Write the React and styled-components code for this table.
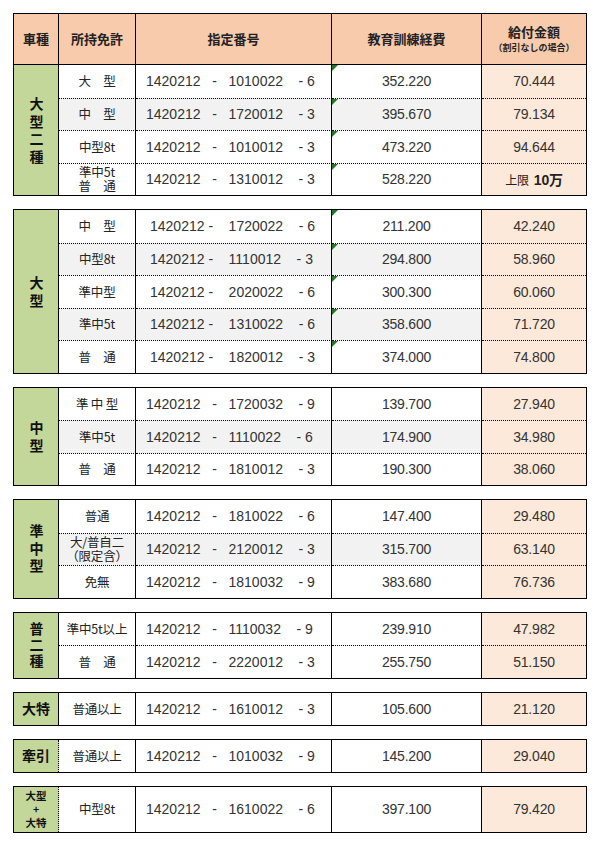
import styled, { createGlobalStyle, css } from 'styled-components'

const GlobalStyle = createGlobalStyle`
  body {
    margin: 0;
    background: #fff;
    font-family: "Liberation Sans", "Noto Sans CJK JP", sans-serif;
    color: #2b2b2b;
  }
`

const Page = styled.div`
  padding: 13px 0 0 13px;
  width: 601px;
  box-sizing: border-box;
`

const Table = styled.div`
  display: grid;
  grid-template-columns: 45px 77px 196px 150px 104px;
  grid-auto-rows: ${p => p.rowH || 32.5}px;
  width: 574px;
  box-sizing: border-box;
  border: 1px solid #000;
  ${p => p.attached ? css`border-top: none;` : css`margin-top: ${p.first ? 0 : 13}px;`}
`

const HeadCell = styled.div`
  background: #f8cbad;
  border-right: ${p => p.last ? 'none' : '1px solid #000'};
  display: flex;
  flex-direction: column;
  align-items: center;
  justify-content: center;
  font-family: "Noto Sans CJK JP", sans-serif;
  font-weight: 700;
  font-size: 13px;
  color: #222;
  line-height: 1.2;
`

const SubHead = styled.span`
  font-size: 9px;
  margin-top: 4px;
`

const Label = styled.div`
  grid-row: span ${p => p.span};
  background: #c4d79b;
  border-right: 1px ${p => p.dotted ? 'dotted' : 'solid'} #000;
  display: flex;
  flex-direction: column;
  align-items: center;
  justify-content: center;
  font-family: "Noto Sans CJK JP", sans-serif;
  font-weight: 700;
  font-size: ${p => p.small ? 10.5 : 14}px;
  line-height: ${p => p.small ? 13.5 : 17}px;
  color: #111;
`

const Upright = styled.span`
  writing-mode: vertical-rl;
  text-orientation: upright;
  letter-spacing: ${p => p.gap}px;
  padding-top: ${p => p.gap}px;
`

const Cell = styled.div`
  position: relative;
  box-sizing: border-box;
  display: flex;
  align-items: center;
  justify-content: ${p => p.left ? 'flex-start' : 'center'};
  text-align: center;
  background: ${p => p.pay ? '#fde9d9' : p.grey ? '#f2f2f2' : '#fff'};
  border-right: ${p => p.last ? 'none' : '1px solid #000'};
  border-top: ${p => p.first ? 'none' : '1px dotted #000'};
  font-size: 14px;
  letter-spacing: -0.2px;
  color: #333;
  ${p => p.flag && css`
    &::before {
      content: '';
      position: absolute;
      top: 0;
      left: 0;
      border-top: 6px solid #1f7a23;
      border-right: 6px solid transparent;
    }
  `}
`

const License = styled.span`
  font-family: "Noto Sans CJK JP", sans-serif;
  font-size: 12.5px;
  line-height: 14px;
  color: #222;
  white-space: pre;
`

const Code = styled.span`
  white-space: pre;
  padding-left: ${p => p.pad}px;
  letter-spacing: 0;
`

const Limit = styled.span`
  font-family: "Noto Sans CJK JP", sans-serif;
  font-size: 12px;
  color: #222;
  b {
    font-family: "Liberation Sans", "Noto Sans CJK JP", sans-serif;
    font-size: 14px;
    margin-left: 5px;
  }
`

const A = '1420212   -   '
const B = '1420212 -    '
const c = (pre, mid, tail) => pre + mid + '    - ' + tail

const sections = [
  {
    label: '大型二種', vertical: true, flag: true, pad: 10,
    rows: [
      ['大　型', c(A, '1010022', '6'), '352.220', '70.444'],
      ['中　型', c(A, '1720012', '3'), '395.670', '79.134', true],
      ['中型8t', c(A, '1010012', '3'), '473.220', '94.644'],
      ['準中5t\n普　通', c(A, '1310012', '3'), '528.220', 'limit'],
    ],
  },
  {
    label: '大型', vertical: true, flag: true, pad: 14,
    rows: [
      ['中　型', c(B, '1720022', '6'), '211.200', '42.240'],
      ['中型8t', c(B, '1110012', '3'), '294.800', '58.960', true],
      ['準中型', c(B, '2020022', '6'), '300.300', '60.060'],
      ['準中5t', c(B, '1310022', '6'), '358.600', '71.720', true],
      ['普　通', c(B, '1820012', '3'), '374.000', '74.800'],
    ],
  },
  {
    label: '中型', vertical: true, pad: 10,
    rows: [
      ['準 中 型', c(A, '1720032', '9'), '139.700', '27.940'],
      ['準中5t', c(A, '1110022', '6'), '174.900', '34.980', true],
      ['普　通', c(A, '1810012', '3'), '190.300', '38.060'],
    ],
  },
  {
    label: '準中型', vertical: true, pad: 10,
    rows: [
      ['普通', c(A, '1810022', '6'), '147.400', '29.480'],
      ['大/普自二\n（限定含）', c(A, '2120012', '3'), '315.700', '63.140', true],
      ['免無', c(A, '1810032', '9'), '383.680', '76.736'],
    ],
  },
  {
    label: '普二種', vertical: true, gap: 2, pad: 10,
    rows: [
      ['準中5t以上', c(A, '1110032', '9'), '239.910', '47.982'],
      ['普　通', c(A, '2220012', '3'), '255.750', '51.150'],
    ],
  },
  {
    label: ['大特'], pad: 10, rowH: 32,
    rows: [['普通以上', c(A, '1610012', '3'), '105.600', '21.120']],
  },
  {
    label: ['牽引'], pad: 10, rowH: 32, dotted: true,
    rows: [['普通以上', c(A, '1010032', '9'), '145.200', '29.040']],
  },
  {
    label: ['大型', '+', '大特'], pad: 10, rowH: 45, dotted: true, small: true,
    rows: [['中型8t', c(A, '1610022', '6'), '397.100', '79.420']],
  },
]

function Section({ s, attached }) {
  return (
    <Table attached={attached} rowH={s.rowH}>
      <Label span={s.rows.length} dotted={s.dotted} small={s.small}>
        {s.vertical
          ? <Upright gap={s.gap ?? 3.5}>{s.label}</Upright>
          : s.label.map((t, i) => <span key={i}>{t}</span>)}
      </Label>
      {s.rows.map(([lic, code, cost, pay, grey], i) => [
        <Cell key={i + 'a'} first={i === 0} grey={grey}><License>{lic}</License></Cell>,
        <Cell key={i + 'b'} first={i === 0} grey={grey} left><Code pad={s.pad}>{code}</Code></Cell>,
        <Cell key={i + 'c'} first={i === 0} grey={grey} flag={s.flag}>{cost}</Cell>,
        <Cell key={i + 'd'} first={i === 0} pay last>
          {pay === 'limit' ? <Limit>上限<b>10万</b></Limit> : pay}
        </Cell>,
      ])}
    </Table>
  )
}

function App() {
  return (
    <>
      <GlobalStyle />
      <Page>
        <Table rowH={50} first>
          <HeadCell>車種</HeadCell>
          <HeadCell>所持免許</HeadCell>
          <HeadCell>指定番号</HeadCell>
          <HeadCell>教育訓練経費</HeadCell>
          <HeadCell last>
            <span>給付金額</span>
            <SubHead>（割引なしの場合）</SubHead>
          </HeadCell>
        </Table>
        {sections.map((s, i) => <Section key={i} s={s} attached={i === 0} />)}
      </Page>
    </>
  )
}

export default App
